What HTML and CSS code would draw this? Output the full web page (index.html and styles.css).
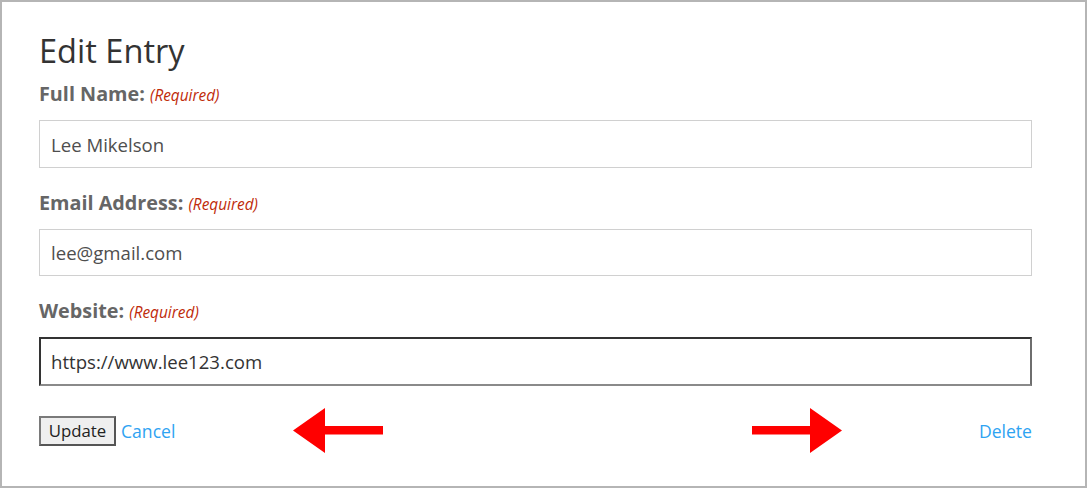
FILE: index.html
```html
<!DOCTYPE html>
<html lang="en">
<head>
<meta charset="utf-8">
<title>Edit Entry</title>
<link rel="stylesheet" href="styles.css">
</head>
<body>
<div class="frame">
  <h1 class="title">Edit Entry</h1>
  <form class="entry-form">
    <div class="field">
      <label class="field-label">Full Name: <span class="req">(Required)</span></label>
      <div class="input">Lee Mikelson</div>
    </div>
    <div class="field">
      <label class="field-label">Email Address: <span class="req">(Required)</span></label>
      <div class="input">lee@gmail.com</div>
    </div>
    <div class="field">
      <label class="field-label">Website: <span class="req">(Required)</span></label>
      <div class="input input-focus">https://www.lee123.com</div>
    </div>
    <div class="actions">
      <button type="button" class="btn">Update</button>
      <a class="link cancel" href="#">Cancel</a>
      <a class="link delete" href="#">Delete</a>
    </div>
  </form>
  <svg class="arrow arrow-left" width="90" height="45" viewBox="0 0 90 45">
    <polygon points="0,22.5 32,0 32,18 90,18 90,26.5 32,26.5 32,45" fill="#ff0000"/>
  </svg>
  <svg class="arrow arrow-right" width="90" height="45" viewBox="0 0 90 45">
    <polygon points="90,22.5 58,0 58,18 0,18 0,26.5 58,26.5 58,45" fill="#ff0000"/>
  </svg>
</div>
</body>
</html>
```
FILE: styles.css
```css
* { box-sizing: border-box; }
html, body { margin: 0; padding: 0; background: #fff; }
body { font-family: "Open Sans", "Liberation Sans", sans-serif; color: #666; }

.frame {
  position: relative;
  width: 1087px;
  height: 488px;
  border: 2px solid #b5b5b5;
  padding: 30px 53px 0 37px;
}

.title {
  margin: 0 0 12.3px 0;
  font-size: 32.6px;
  line-height: 38px;
  font-weight: 400;
  color: #333;
}

.entry-form { margin: 0; }

.field { margin-bottom: 23px; }

.field-label {
  display: block;
  height: 24px;
  font-size: 19.8px;
  line-height: 24px;
  font-weight: 700;
  color: #666;
  margin-bottom: 14px;
  white-space: nowrap;
}

.req {
  font-size: 15.4px;
  line-height: 16px;
  font-style: italic;
  font-weight: 400;
  color: #c02b0a;
}

.input {
  height: 47.5px;
  border: 1px solid #d0d0d0;
  padding: 0 11px;
  display: flex;
  align-items: center;
  font-size: 18.6px;
  color: #4e4e4e;
  background: #fff;
}

.input-focus {
  border: 2px solid;
  border-color: #333 #6e6e6e #8a8a8a #333;
  padding: 0 10px;
  height: 48.5px;
  color: #333;
}

.actions {
  display: flex;
  align-items: center;
  margin-top: 30px;
}

.btn {
  height: 30px;
  width: 77px;
  padding: 0;
  font-family: "Open Sans", "Liberation Sans", sans-serif;
  font-size: 16.8px;
  color: #222;
  background: #efefef;
  border: 2px solid;
  border-color: #7a7a7a #555 #555 #7a7a7a;
  border-radius: 0;
}

.link {
  font-size: 17.6px;
  color: #2ea3f2;
  text-decoration: none;
}

.cancel { margin-left: 5px; }
.delete { margin-left: auto; }

.arrow { position: absolute; }
.arrow-left { left: 291px; top: 406px; }
.arrow-right { left: 750px; top: 406px; }
```
